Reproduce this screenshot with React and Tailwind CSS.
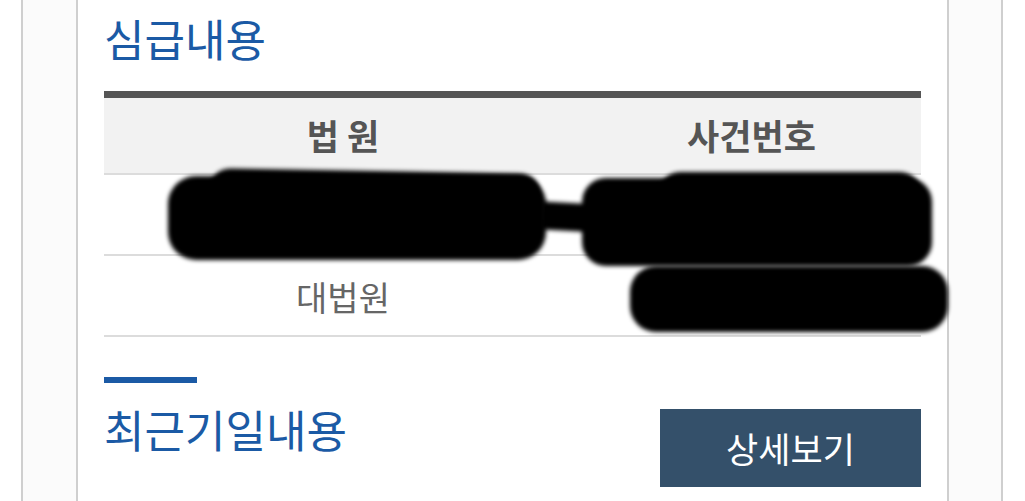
import React from 'react';

const font = { fontFamily: '"Noto Sans CJK KR", "Noto Sans", sans-serif' };

const rows = [
    { court: '', caseNo: '' },
    { court: '대법원', caseNo: '' },
];

const App = () => {
    return (
        <div className="relative w-[1025px] h-[501px] overflow-hidden bg-white" style={font}>
            <div className="ml-[21px] w-[982px] h-full border-x-2 border-[#cfcfcf] bg-[#fbfbfb]">
                <div className="ml-[53px] w-[873px] h-full border-x-2 border-[#cfcfcf] bg-white px-[26px] pt-[14px]">
                    {/* 심급내용 */}
                    <h2 className="text-[44px] leading-[48px] text-[#1b5aa5] font-normal">심급내용</h2>

                    <div className="mt-[29px] border-t-[7px] border-[#555555]">
                        <div className="flex h-[77px] bg-[#f2f2f2] border-b-2 border-[#dcdcdc] text-[35px] font-bold text-[#555555]">
                            <div className="w-[478px] flex items-center justify-center">법 원</div>
                            <div className="flex-1 flex items-center justify-center">사건번호</div>
                        </div>
                        {rows.map((row, i) => (
                            <div key={i} className="flex h-[81px] border-b-2 border-[#dcdcdc] text-[34px] text-[#666666]">
                                <div className="w-[478px] flex items-center justify-center pt-[2px]">{row.court}</div>
                                <div className="flex-1 flex items-center justify-center">{row.caseNo}</div>
                            </div>
                        ))}
                    </div>

                    {/* 최근기일내용 */}
                    <div className="mt-[40px] w-[93px] h-[6px] bg-[#1b5aa5]" />
                    <div className="flex items-start justify-between mt-[22px]">
                        <h2 className="text-[44px] leading-[48px] text-[#1b5aa5] font-normal">최근기일내용</h2>
                        <button className="mt-[4px] w-[261px] h-[78px] bg-[#34506a] text-white text-[35px] flex items-center justify-center">
                            상세보기
                        </button>
                    </div>
                </div>
            </div>

            {/* redaction marks over the case rows */}
            <div className="absolute left-[168px] top-[176px] w-[378px] h-[84px] bg-black rounded-[28px] blur-[2px]" />
            <div className="absolute left-[210px] top-[171px] w-[330px] h-[40px] bg-black rounded-[30px] blur-[2px] rotate-[1deg]" />
            <div className="absolute left-[540px] top-[204px] w-[100px] h-[28px] bg-black rotate-[3deg] blur-[2px]" />
            <div className="absolute left-[582px] top-[178px] w-[350px] h-[88px] bg-black rounded-[24px] blur-[2px]" />
            <div className="absolute left-[660px] top-[172px] w-[260px] h-[40px] bg-black rounded-[30px] blur-[2px]" />
            <div className="absolute left-[630px] top-[266px] w-[318px] h-[66px] bg-black rounded-[26px] blur-[2px]" />
        </div>
    );
};

export default App;
